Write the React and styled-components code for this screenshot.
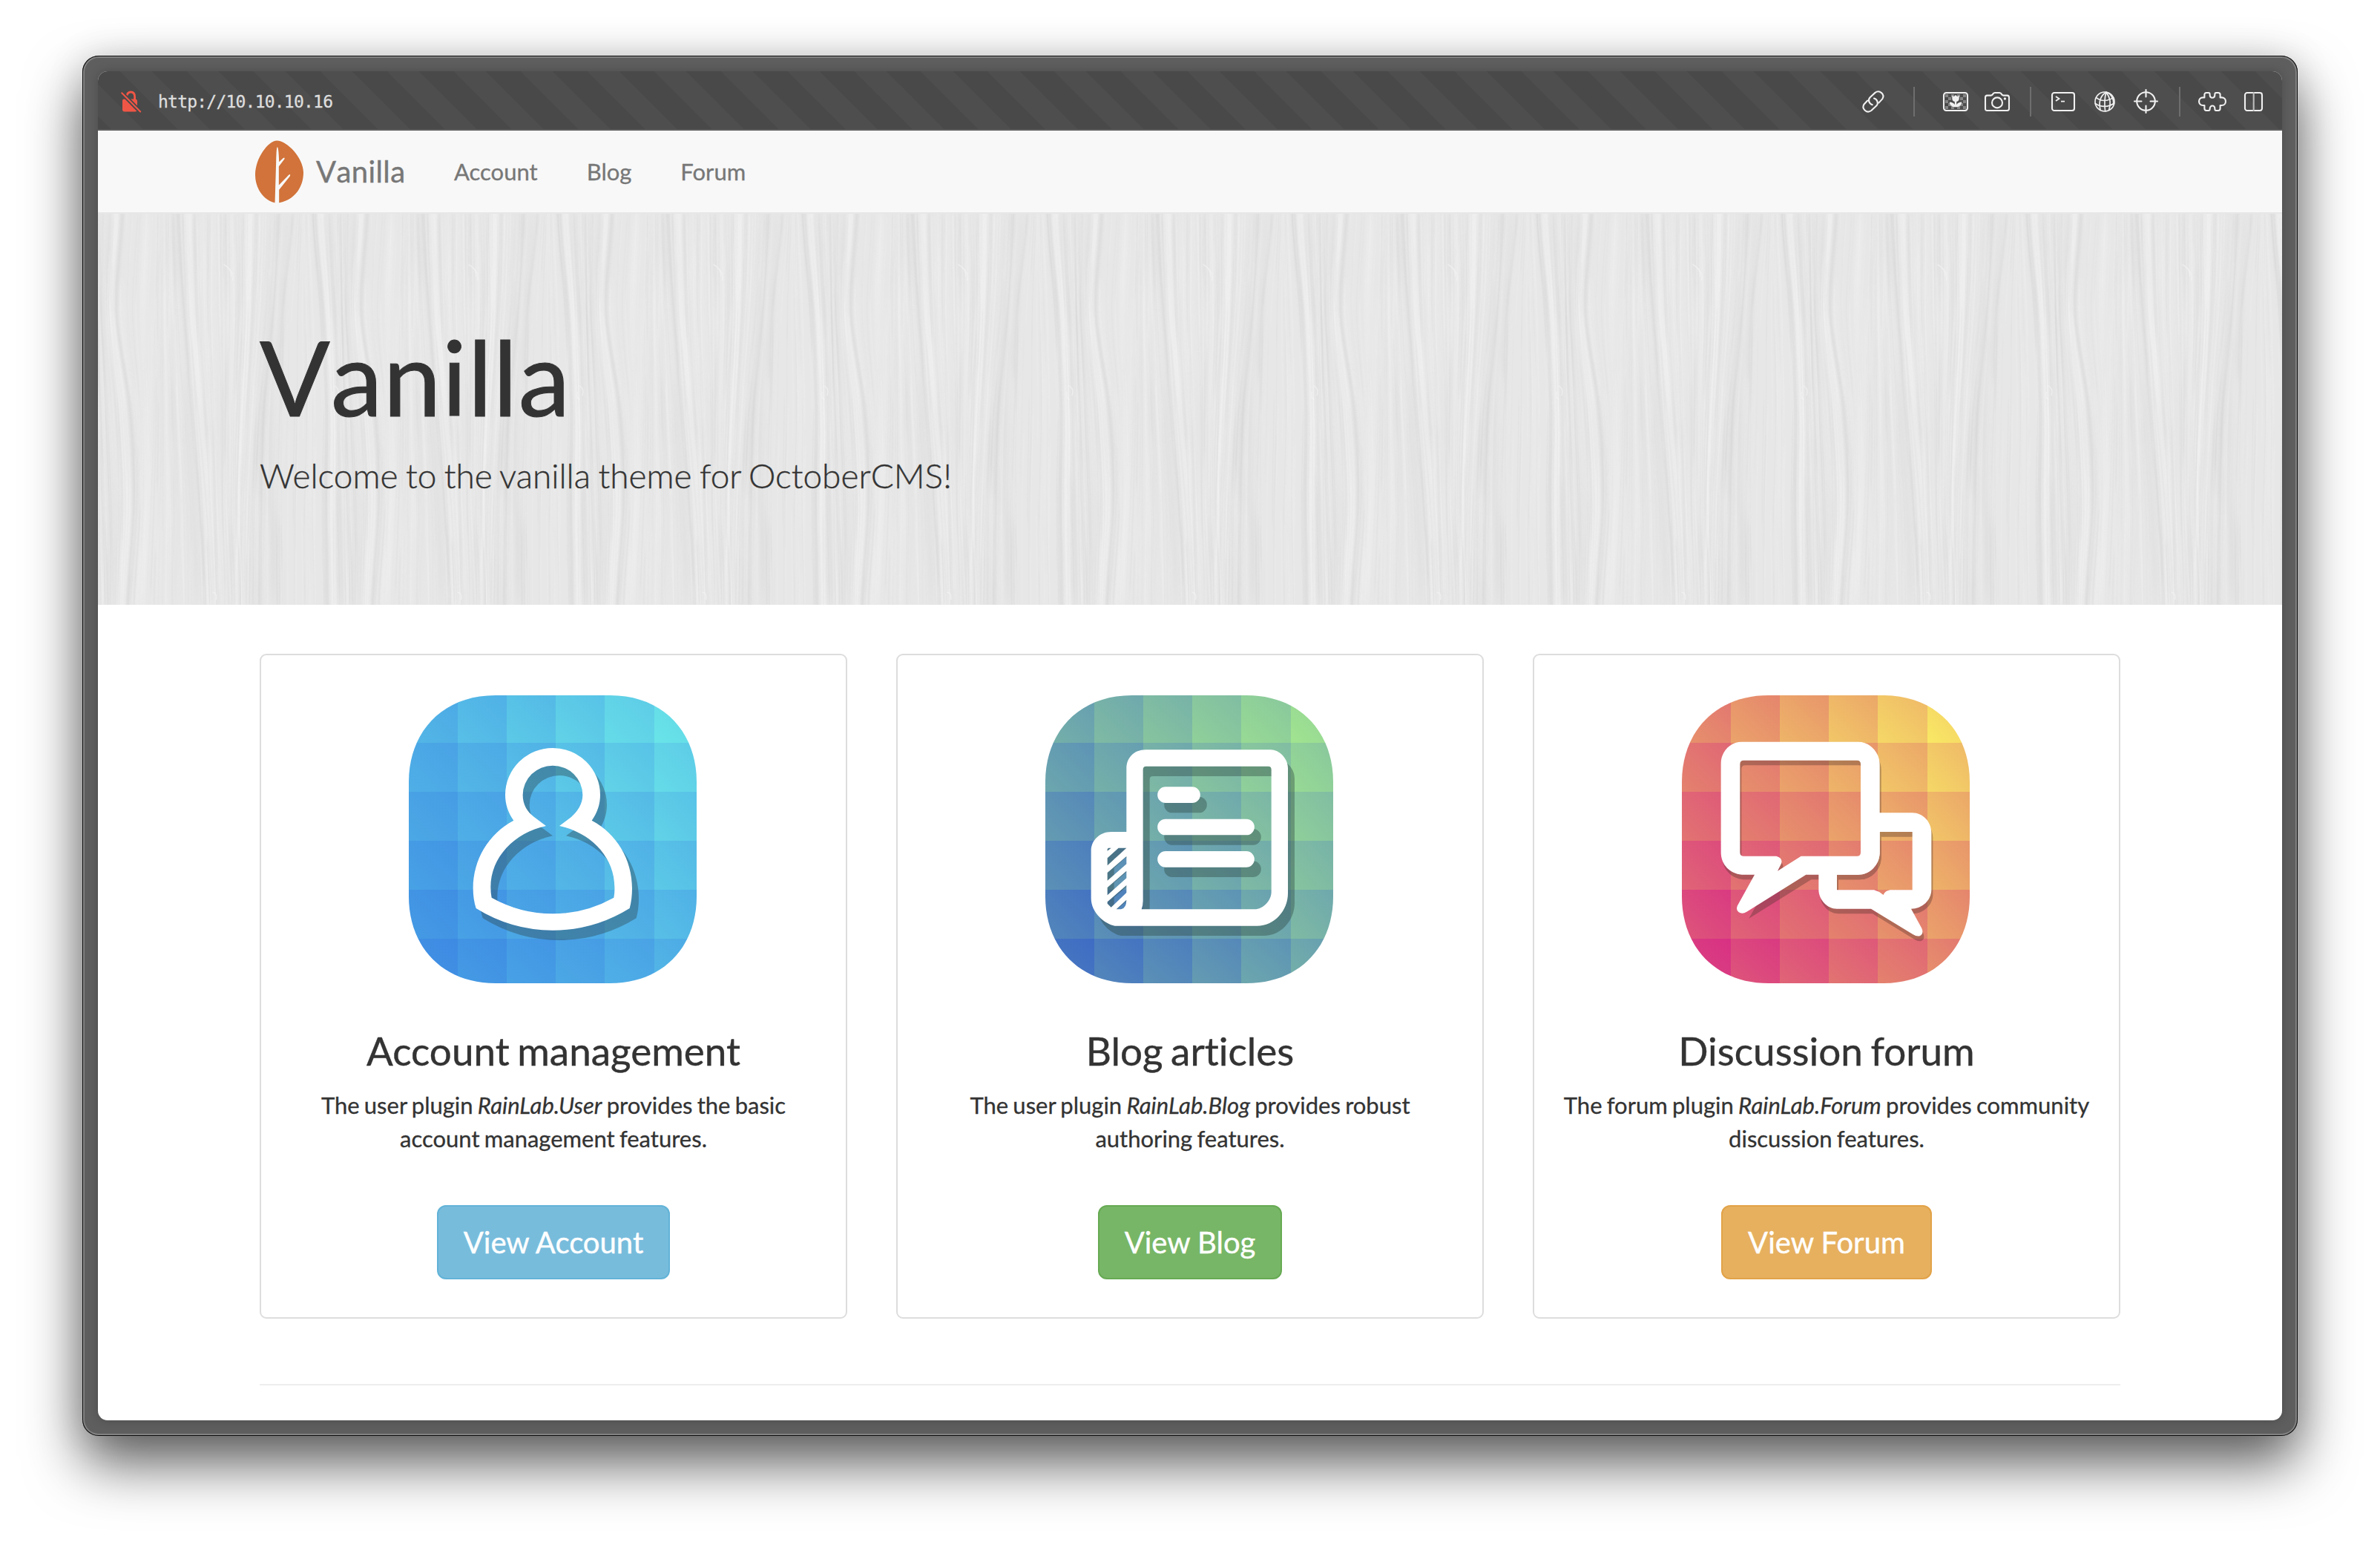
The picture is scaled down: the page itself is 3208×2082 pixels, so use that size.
import React from "react";
import styled, { createGlobalStyle } from "styled-components";

const GlobalStyle = createGlobalStyle`
  * { box-sizing: border-box; }
  body { margin: 0; background: #fff; }
  h1, h2, p { margin: 0; font-weight: 400; }
`;

/* ---------- window ---------- */

const Desktop = styled.div`
  width: 3208px;
  height: 2082px;
  padding: 75px 111px 147px;
  overflow: hidden;
  background: #fff;
  font-family: Lato, sans-serif;
  font-variant-ligatures: none;
  color: #333;
`;

const Frame = styled.div`
  height: 1860px;
  padding: 21px;
  border-radius: 22px;
  background: #5e5e5e;
  box-shadow:
    inset 0 0 0 1px #0c0c0c,
    inset 0 0 0 3px #828282,
    0 38px 76px rgba(0, 0, 0, 0.62),
    0 0 50px rgba(0, 0, 0, 0.12);
`;

const Screen = styled.div`
  height: 1818px;
  display: flex;
  flex-direction: column;
  border-radius: 13px;
  overflow: hidden;
  background: #fff;
  box-shadow: 0 0 14px rgba(0, 0, 0, 0.2);
`;

/* ---------- browser bar ---------- */

const Bar = styled.header`
  flex: none;
  height: 80px;
  display: flex;
  align-items: center;
  padding: 3px 26px 0 31px;
  border-bottom: 2px solid #5c5c5c;
  background: repeating-linear-gradient(
      45deg,
      #494949 0 12.5px,
      #4e4e4e 12.5px 43px,
      #494949 43px 63.6px
    )
    padding-box;
`;

const Url = styled.span`
  flex: 1;
  margin-left: 22px;
  font: 23px/30px "DejaVu Sans Mono", monospace;
  letter-spacing: -0.78px;
  color: #dedede;
  -webkit-text-stroke: 0.3px #dedede;
`;

const Glyph = styled.svg`
  flex: none;
  display: block;
  overflow: visible;
  width: ${(p) => p.$w}px;
  height: ${(p) => p.$h}px;
  margin-left: ${(p) => p.$gap || 0}px;
  fill: none;
  stroke: #f0f0f0;
  stroke-width: 2.1;
  stroke-linecap: round;
  stroke-linejoin: round;
`;

const Divider = styled.i`
  flex: none;
  width: 2px;
  height: 40px;
  margin-left: ${(p) => p.$gap}px;
  background: #6e6e6e;
`;

const InsecureLock = () => (
  <Glyph $w={28} $h={30} viewBox="0 0 28 30">
    <path d="M7.5 8 C8.5 3.5 11 2 13.2 2 C17 2 18.6 5 18.6 8.5 V13" stroke="#f05646" strokeWidth="2.8" strokeLinecap="butt" />
    <path d="M4 11.5 H19 Q22 11.5 22 14.5 V25.5 Q22 28.5 19 28.5 H5 Q2 28.5 2 25.5 V13.5 Q2 11.5 4 11.5Z" fill="#f05646" stroke="none" />
    <path d="M2 4 L26 28.5" stroke="#494949" strokeWidth="5.6" />
    <path d="M1.2 3.2 L26.2 28.5" stroke="#f05646" strokeWidth="2" />
  </Glyph>
);

const LinkGlyph = () => (
  <Glyph $w={30} $h={30} viewBox="0 0 30 30">
    <path d="M13.8 19.2 C9.2 17.8 7.4 12.6 10.6 9.2 L17.5 2.9 C23.4 -1.6 31.2 5.2 27.2 11.4 L22.4 16.6" />
    <path d="M16 10.6 C20.6 12 22.4 17.2 19.2 20.6 L12.3 27 C6.4 31.4 -1.4 24.6 2.6 18.4 L7.2 13.6" />
  </Glyph>
);

const checks = [
  [3, 3], [7, 7], [3, 11], [7, 15], [3, 19], [11, 19], [27, 3], [23, 7], [27, 11], [23, 15], [27, 19], [19, 19], [11, 3], [19, 3],
];

const PhotoGlyph = () => (
  <Glyph $w={34} $h={26} $gap={38} viewBox="0 0 34 26">
    <g fill="#858585" stroke="none">
      {checks.map(([x, y]) => (
        <rect key={`${x}-${y}`} x={x} y={y} width="4" height="4" />
      ))}
    </g>
    <rect x="1" y="1" width="32" height="24" rx="3.5" />
    <path d="M12.3 4.5 L14.6 6.3 L17 4 L19.4 6.3 L21.7 4.5 V9 Q21.4 12.6 18.2 13 V17 Q20.5 13.6 25.3 13.4 Q24.8 19.6 18.2 20.2 H15.8 Q9.2 19.6 8.7 13.4 Q13.5 13.6 15.8 17 V13 Q12.6 12.6 12.3 9Z" fill="#f0f0f0" stroke="none" />
  </Glyph>
);

const CameraGlyph = () => (
  <Glyph $w={34} $h={26} $gap={22} viewBox="0 0 34 26">
    <path d="M3.5 4.6 H8.6 Q10.6 4.2 11.6 2.2 Q12.4 1 14 1 H20 Q21.6 1 22.4 2.2 Q23.4 4.2 25.4 4.6 H30.5 Q33 4.8 33 7.2 V22.6 Q33 25 30.5 25 H3.5 Q1 25 1 22.6 V7.2 Q1 4.8 3.5 4.6Z" />
    <circle cx="17" cy="14.4" r="7" />
    <circle cx="27.4" cy="9" r="1.7" fill="#f0f0f0" stroke="none" />
  </Glyph>
);

const TerminalGlyph = () => (
  <Glyph $w={32} $h={26} $gap={27} viewBox="0 0 32 26">
    <rect x="1" y="1" width="30" height="24" rx="3" />
    <path d="M6 6 L10.4 9 L6 12 M13 12.6 H18" strokeWidth="1.9" strokeLinecap="butt" strokeLinejoin="miter" />
  </Glyph>
);

const GlobeGlyph = () => (
  <Glyph $w={28} $h={28} $gap={26} viewBox="0 0 28 28">
    <g strokeWidth="1.7">
      <circle cx="14" cy="14" r="13" />
      <path d="M16 1.2 C8 6 5.5 14 8 25 M16 1.2 C13.5 9 13.5 18 14.6 27 M16 1.2 C21 8 23 16 19.6 25.4 M16 1.2 C22 3 26 9 26 18" />
      <path d="M2.6 8.6 C9 14 18 13.6 25.6 8.4 M1.3 16.5 C9 22 19.5 21.6 26.6 16" />
    </g>
  </Glyph>
);

const CrosshairGlyph = () => (
  <Glyph $w={33} $h={33} $gap={25} viewBox="0 0 33 33">
    <circle cx="16.5" cy="16.5" r="12.3" />
    <path d="M16.5 1 V10.5 M16.5 22.5 V32 M1 16.5 H10.5 M22.5 16.5 H32" />
  </Glyph>
);

const PuzzleGlyph = () => (
  <Glyph $w={38} $h={26} $gap={24} viewBox="0 0 38 26">
    <path d="M11 1 H14 Q15.6 1 15.6 3 C15.6 9.4 22.4 9.4 22.4 3 Q22.4 1 24 1 H27 Q29.6 1 29.6 3.6 V7.4 H31.5 C38.8 7.4 38.8 18 31.5 18 H29.6 V22 Q29.6 25 27 25 H24 Q22.4 25 22.4 23 C22.4 17 15.6 17 15.6 23 Q15.6 25 14 25 H11 Q8.4 25 8.4 22 V18 H6.5 C-0.8 18 -0.8 7.4 6.5 7.4 H8.4 V3.6 Q8.4 1 11 1Z" />
  </Glyph>
);

const ColumnsGlyph = () => (
  <Glyph $w={25} $h={26} $gap={24} viewBox="0 0 25 26">
    <rect x="1" y="1" width="23" height="24" rx="3" />
    <path d="M12.7 1 V25" stroke="#bdbdbd" />
  </Glyph>
);

/* ---------- site navigation ---------- */

const Nav = styled.nav`
  flex: none;
  height: 112px;
  display: flex;
  align-items: center;
  padding: 0 0 0 212px;
  border-bottom: 2px solid #e7e7e7;
  background: #f8f8f8;
  color: #777;
`;

const Leaf = styled.svg`
  display: block;
  width: 65px;
  height: 85px;
`;

const Brand = styled.span`
  width: 120px;
  margin-left: 17px;
  padding-bottom: 1px;
  font-size: 40px;
  line-height: 60px;
  letter-spacing: 0.4px;
  font-kerning: none;
  white-space: nowrap;
  -webkit-text-stroke: 0.4px;
`;

const NavLink = styled.a`
  margin-left: 66px;
  padding-bottom: 1px;
  font-size: 31px;
  line-height: 60px;
  white-space: nowrap;
  -webkit-text-stroke: 0.3px;
`;

/* ---------- hero ---------- */

const Hero = styled.section`
  flex: none;
  position: relative;
  height: 527px;
  padding: 142px 218px 0;
  background: #e7e7e7;
`;

const Wood = styled.svg`
  position: absolute;
  inset: 0;
  width: 100%;
  height: 100%;
`;

const Title = styled.h1`
  position: relative;
  font-size: 140px;
  line-height: 154px;
  letter-spacing: 1.1px;
  font-kerning: none;
  -webkit-text-stroke: 1px;
`;

const Lead = styled.p`
  position: relative;
  margin-top: 25px;
  font-size: 46px;
  font-weight: 300;
  line-height: 64px;
  word-spacing: -2.1px;
  -webkit-text-stroke: 0.4px;
`;

const LEVELS = [0, 390, 780, 1170, 1590];
const GUIDES = [
  [75, 50, 105, 125, 95],
  [215, 200, 195, 180, 160],
  [300, 325, 355, 388, 408],
  [420, 420, 440, 455, 470],
  [540, 545, 530, 525, 540],
  [615, 605, 582, 560, 550],
  [700, 680, 640, 625, 620],
  [770, 730, 720, 712, 715],
  [850, 885, 905, 900, 905],
  [960, 965, 975, 990, 1000],
  [1065, 1040, 1095, 1115, 1085],
];

const fiberPath = (xs) => {
  let d = `M${xs[0].toFixed(1)} 0`;
  for (let i = 1; i < xs.length; i++) {
    const h = (LEVELS[i] - LEVELS[i - 1]) / 3;
    const before = xs[Math.max(0, i - 2)];
    const after = xs[Math.min(xs.length - 1, i + 1)];
    const c1 = xs[i - 1] + (xs[i] - before) / 6;
    const c2 = xs[i] - (after - xs[i - 1]) / 6;
    d += ` C${c1.toFixed(1)} ${LEVELS[i - 1] + h} ${c2.toFixed(1)} ${LEVELS[i] - h} ${xs[i].toFixed(1)} ${LEVELS[i]}`;
  }
  return d;
};

const fiberAt = (pos) => {
  const i = Math.floor(pos);
  const f = pos - i;
  return GUIDES[i].map((x, k) => x + (GUIDES[i + 1][k] - x) * f);
};

const random = (() => {
  let s = 20117;
  return () => {
    s = (s * 16807) % 2147483647;
    return s / 2147483647;
  };
})();

const makeFibers = (count, min, max, strength) =>
  Array.from({ length: count }, () => {
    const drift = (random() - 0.5) * 40;
    return {
      d: fiberPath(fiberAt(random() * 9.999).map((x, k) => x + (drift * k) / 4)),
      w: min + random() * (max - min),
      light: random() > 0.5,
      o: strength * (0.3 + random() * 0.7),
      dash: `${Math.round(300 + random() * 900)} ${Math.round(100 + random() * 500)}`,
      shift: Math.round(random() * 1500),
    };
  });

const broad = makeFibers(70, 12, 36, 0.3);
const fine = makeFibers(240, 2, 7, 0.3);
const ridges = [
  [0, 14], [2, 16], [5, 14], [8, 16], [6.1, 10],
].map(([p, w]) => ({ d: fiberPath(fiberAt(p)), w, light: false, o: 0.46 }));
const rims = [
  [2.35, 34], [4.75, 34], [8.25, 30], [9.75, 30],
].map(([p, w]) => ({ d: fiberPath(fiberAt(p)), w, light: true, o: 0.55 }));

const Fibers = ({ items }) =>
  items.map((f, i) => (
    <path
      key={i}
      d={f.d}
      fill="none"
      stroke={f.light ? "#f2f2f2" : "#d6d6d6"}
      strokeWidth={f.w}
      opacity={f.o}
      strokeDasharray={f.dash}
      strokeDashoffset={f.shift}
    />
  ));

const WoodGrain = () => (
  <Wood>
    <defs>
      <filter id="soft" x="-10%" y="-10%" width="120%" height="120%">
        <feGaussianBlur stdDeviation="5 60" />
      </filter>
      <filter id="softRidge" x="-10%" y="-10%" width="120%" height="120%">
        <feGaussianBlur stdDeviation="5 1" />
      </filter>
      <filter id="softFine" x="-10%" y="-10%" width="120%" height="120%">
        <feGaussianBlur stdDeviation="1.2 20" />
      </filter>
      <g id="grain">
        <g filter="url(#soft)">
          <Fibers items={broad} />
        </g>
        <g filter="url(#softRidge)">
          <Fibers items={rims} />
          <Fibers items={ridges} />
        </g>
        <g filter="url(#softFine)">
          <Fibers items={fine} />
        </g>
        <g fill="none" stroke="#f3f3f3" strokeWidth="4" opacity="0.7">
          <path d="M485 205 Q520 225 515 255 M500 215 Q530 240 520 270" />
          <path d="M930 695 Q955 705 945 735 M925 720 Q920 750 935 750" />
          <path d="M440 1530 Q460 1535 455 1560" />
        </g>
      </g>
      <pattern id="wood" x="8" y="0" width="330" height="530" patternUnits="userSpaceOnUse">
        <g transform="scale(0.3333)">
          <use href="#grain" x="-990" />
          <use href="#grain" />
          <use href="#grain" x="990" />
        </g>
      </pattern>
    </defs>
    <rect width="100%" height="100%" fill="url(#wood)" />
  </Wood>
);

/* ---------- feature cards ---------- */

const Features = styled.main`
  display: flex;
  gap: 66px;
  margin: 66px 218px 0;
`;

const Card = styled.article`
  flex: 1;
  height: 896px;
  display: flex;
  flex-direction: column;
  align-items: center;
  padding-top: 54px;
  border: 2px solid #ddd;
  border-radius: 9px;
  text-align: center;
`;

const Tile = styled.svg`
  flex: none;
  display: block;
  width: 388px;
  height: 388px;
  margin-right: 2px;
`;

const CardTitle = styled.h2`
  margin-top: 61px;
  font-size: 53px;
  line-height: 60px;
  word-spacing: -3px;
  -webkit-text-stroke: 0.4px;
`;

const CardText = styled.p`
  margin-top: 21px;
  font-size: 31px;
  line-height: 45px;
  word-spacing: -1.7px;
  white-space: nowrap;
  -webkit-text-stroke: 0.3px;
`;

const Button = styled.a`
  height: 100px;
  margin-top: 67px;
  padding: 0 34px;
  border: 2px solid ${(p) => p.$edge};
  border-radius: 12px;
  background: ${(p) => p.$fill};
  color: #fff;
  font-size: 40px;
  line-height: 96px;
  -webkit-text-stroke: 0.4px;
`;

const Rule = styled.hr`
  width: 2508px;
  height: 2px;
  margin: 88px 218px 0;
  border: 0;
  background: #eee;
`;

const EDGES_X = [0, 197, 396, 595, 793, 992, 1164];
const EDGES_Y = [0, 192, 391, 589, 787, 985, 1164];

const mix = (ramp, t) => {
  const k = Math.min(1, Math.max(0, t)) * 2;
  const i = k >= 1 ? 1 : 0;
  const f = k - i;
  return `rgb(${ramp[i].map((v, n) => Math.round(v + (ramp[i + 1][n] - v) * f)).join(",")})`;
};

const cells = [];
for (let r = 0; r < 6; r++) for (let c = 0; c < 6; c++) cells.push([c, r]);

const AppTile = ({ id, ramp, children }) => (
  <Tile viewBox="0 0 1164 1164">
    <defs>
      <clipPath id={`${id}-shape`}>
        <path d="M350 0 H814 C1030 0 1164 150 1164 350 V814 C1164 1014 1030 1164 814 1164 H350 C134 1164 0 1014 0 814 V350 C0 150 134 0 350 0Z" />
      </clipPath>
      {cells.map(([c, r]) => {
        const t = 0.05 + ((c + 5 - r) / 10) * 0.86;
        return (
          <linearGradient key={`${c}${r}`} id={`${id}-${c}${r}`} x1="0" y1="1" x2="1" y2="0">
            <stop offset="0" stopColor={mix(ramp, t + 0.08)} />
            <stop offset="1" stopColor={mix(ramp, t - 0.08)} />
          </linearGradient>
        );
      })}
    </defs>
    <g clipPath={`url(#${id}-shape)`} shapeRendering="crispEdges">
      {cells.map(([c, r]) => (
        <rect
          key={`${c}${r}`}
          x={EDGES_X[c]}
          y={EDGES_Y[r]}
          width={EDGES_X[c + 1] - EDGES_X[c]}
          height={EDGES_Y[r + 1] - EDGES_Y[r]}
          fill={`url(#${id}-${c}${r})`}
        />
      ))}
    </g>
    {children}
  </Tile>
);

const PERSON =
  "M517 586 C495 556 483 520 483 483 A192 190 0 0 1 867 483 C867 520 855 556 833 586 C935 640 996 745 996 860 Q996 905 986 941 Q842 1030 675 1030 Q508 1030 365 941 Q353 905 353 860 C353 745 415 640 517 586Z " +
  "M648 608 L600 572 C570 550 554 520 554 483 A121 119 0 0 1 796 483 C796 520 775 550 750 572 L702 608 C830 635 925 735 925 855 Q926 880 922 898 Q805 963 675 963 Q545 963 428 898 Q424 880 424 855 C424 735 520 635 648 608Z";

const pill = (x, y, w) => `M${x + 32} ${y} H${x + w - 32} a32 32 0 0 1 0 65 H${x + 32} a32 32 0 0 1 0 -65Z`;

const PAPER =
  "M417 632 V375 C417 330 450 300 495 300 H1000 C1035 300 1070 335 1070 375 V880 C1070 950 1015 1012 945 1012 H370 C330 1005 274 960 274 900 V710 C274 665 310 632 355 632Z " +
  "M484 380 Q484 367 497 367 H990 Q1003 367 1003 380 V875 C1003 910 970 945 935 945 H478 Q484 930 484 910Z " +
  "M340 738 L385 697 H417 L340 768Z M417 731 V762 L340 829 V797Z M417 790 V819 L340 888 V857Z M417 848 V878 L355 937 L340 922 V915Z M417 907 Q417 940 395 945 H376Z M340 701 L345 697 H355 L340 709Z ";

const LINES = pill(543, 450, 172) + pill(543, 580, 391) + pill(543, 710, 391);

const BUBBLE_HOLE =
  "M333 343 H791 Q806 343 806 358 V715 Q806 730 791 730 H565 L470 790 L485 760 Q492 738 465 730 H333 Q318 730 318 715 V358 Q318 343 333 343Z";
const BUBBLE =
  "M325 268 H797 C845 268 883 312 883 360 V715 C883 765 843 805 795 805 H585 L345 955 Q328 966 313 957 Q300 947 308 930 L377 805 H325 C278 800 241 765 241 715 V355 C241 308 278 268 325 268Z " + BUBBLE_HOLE;
const BUBBLE_SHADE =
  "M325 268 H797 C845 268 883 312 883 360 V715 C883 765 843 805 795 805 H600 L348 962 L400 870 L377 805 H325 C278 800 241 765 241 715 V355 C241 308 278 268 325 268Z " + BUBBLE_HOLE;
const REPLY =
  "M840 555 H1015 C1058 555 1092 592 1092 635 V865 C1092 908 1055 943 1010 943 L1053 1022 Q1062 1045 1045 1053 Q1032 1056 1018 1047 L848 943 H710 C670 943 636 905 636 865 V770 H840Z " +
  "M883 632 H1015 V867 H925 Q902 872 898 887 Q880 872 860 867 H710 V805 H795 C843 805 883 765 883 715Z";

const ORANGE_LEAF =
  "M849 385 C890 385 957 455 957 515 C957 580 915 628 858 638 V585 L902 530 Q906 519 898 524 L857 566 V490 L880 460 Q882 452 874 457 L858 472 Q856 412 851 412 Q847 412 846 470 L841 638 C795 628 761 580 761 525 C761 455 815 385 849 385Z";

const BLUE = [[61, 138, 227], [80, 177, 230], [106, 230, 232]];
const GREEN = [[62, 108, 196], [112, 170, 172], [162, 229, 142]];
const WARM = [[216, 48, 132], [229, 135, 108], [249, 235, 100]];

export default function App() {
  return (
    <>
      <GlobalStyle />
      <Desktop>
        <Frame>
          <Screen>
            <Bar>
              <InsecureLock />
              <Url>http://10.10.10.16</Url>
              <LinkGlyph />
              <Divider $gap={39} />
              <PhotoGlyph />
              <CameraGlyph />
              <Divider $gap={27} />
              <TerminalGlyph />
              <GlobeGlyph />
              <CrosshairGlyph />
              <Divider $gap={28} />
              <PuzzleGlyph />
              <ColumnsGlyph />
            </Bar>
            <Nav>
              <Leaf viewBox="761 385 196 254">
                <path d={ORANGE_LEAF} fill="#d1733a" />
              </Leaf>
              <Brand>Vanilla</Brand>
              <NavLink>Account</NavLink>
              <NavLink>Blog</NavLink>
              <NavLink>Forum</NavLink>
            </Nav>
            <Hero>
              <WoodGrain />
              <Title>Vanilla</Title>
              <Lead>Welcome to the vanilla theme for OctoberCMS!</Lead>
            </Hero>
            <Features>
              <Card>
                <AppTile id="account" ramp={BLUE}>
                  <g transform="translate(-93 -80)" fillRule="evenodd">
                    <path d={PERSON} transform="translate(27 40)" fill="#2d4650" opacity="0.4" />
                    <path d={PERSON} fill="#fff" />
                  </g>
                </AppTile>
                <CardTitle>Account management</CardTitle>
                <CardText>
                  The user plugin <em>RainLab.User</em> provides the basic
                  <br />
                  account management features.
                </CardText>
                <Button $fill="#78bcdc" $edge="#62b3d8">View Account</Button>
              </Card>
              <Card>
                <AppTile id="blog" ramp={GREEN}>
                  <g transform="translate(-89 -80)" fillRule="evenodd">
                    <path d={PAPER + LINES} transform="translate(27 40)" fill="#2d4640" opacity="0.4" />
                    <path d={PAPER} fill="#fff" />
                    <path d={LINES} fill="#fff" />
                  </g>
                </AppTile>
                <CardTitle>Blog articles</CardTitle>
                <CardText>
                  The user plugin <em>RainLab.Blog</em> provides robust
                  <br />
                  authoring features.
                </CardText>
                <Button $fill="#77b666" $edge="#67aa54">View Blog</Button>
              </Card>
              <Card>
                <AppTile id="forum" ramp={WARM}>
                  <g transform="translate(-83 -80)" fillRule="evenodd">
                    <g transform="translate(6 20)" fill="#50322d" opacity="0.36">
                      <path d={REPLY} />
                      <path d={BUBBLE_SHADE} />
                    </g>
                    <path d={REPLY} fill="#fff" />
                    <path d={BUBBLE} fill="#fff" />
                  </g>
                </AppTile>
                <CardTitle>Discussion forum</CardTitle>
                <CardText>
                  The forum plugin <em>RainLab.Forum</em> provides community
                  <br />
                  discussion features.
                </CardText>
                <Button $fill="#e6b05f" $edge="#e2a348">View Forum</Button>
              </Card>
            </Features>
            <Rule />
          </Screen>
        </Frame>
      </Desktop>
    </>
  );
}
